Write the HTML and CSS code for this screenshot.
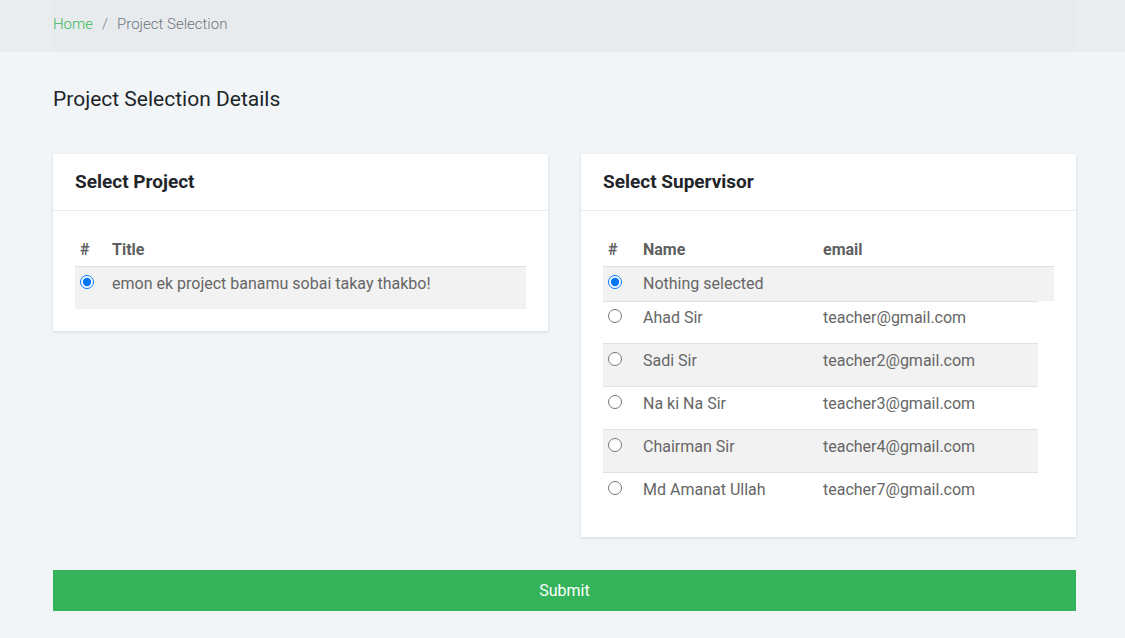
FILE: index.html
```html
<!DOCTYPE html>
<html>
<head>
<meta charset="utf-8">
<link rel="stylesheet" href="styles.css">
</head>
<body>
<div class="topband">
  <nav class="breadcrumb">
    <a class="crumb-link" href="#">Home</a>
    <span class="crumb-sep">/</span>
    <span class="crumb-current">Project Selection</span>
  </nav>
</div>
<main class="container">
  <h1 class="page-title">Project Selection Details</h1>
  <div class="cards">
    <section class="card">
      <header class="card-header">Select Project</header>
      <div class="card-body">
        <div class="trow thead proj-cols"><div class="cell">#</div><div class="cell">Title</div></div>
        <div class="trow striped proj-cols tall"><div class="cell"><input class="radio" type="radio" name="project" checked></div><div class="cell">emon ek project banamu sobai takay thakbo!</div></div>
      </div>
    </section>
    <section class="card">
      <header class="card-header">Select Supervisor</header>
      <div class="card-body">
        <div class="trow thead sup-cols"><div class="cell">#</div><div class="cell">Name</div><div class="cell">email</div></div>
        <div class="trow striped sup-cols"><div class="cell"><input class="radio" type="radio" name="sup" checked></div><div class="cell">Nothing selected</div><div class="cell"></div></div>
        <div class="subtable">
          <div class="trow sup-cols tall"><div class="cell"><input class="radio" type="radio" name="sup"></div><div class="cell">Ahad Sir</div><div class="cell">teacher@gmail.com</div></div>
          <div class="trow striped sup-cols tall"><div class="cell"><input class="radio" type="radio" name="sup"></div><div class="cell">Sadi Sir</div><div class="cell">teacher2@gmail.com</div></div>
          <div class="trow sup-cols tall"><div class="cell"><input class="radio" type="radio" name="sup"></div><div class="cell">Na ki Na Sir</div><div class="cell">teacher3@gmail.com</div></div>
          <div class="trow striped sup-cols tall"><div class="cell"><input class="radio" type="radio" name="sup"></div><div class="cell">Chairman Sir</div><div class="cell">teacher4@gmail.com</div></div>
          <div class="trow sup-cols tall"><div class="cell"><input class="radio" type="radio" name="sup"></div><div class="cell">Md Amanat Ullah</div><div class="cell">teacher7@gmail.com</div></div>
        </div>
      </div>
    </section>
  </div>
  <button class="submit" type="button">Submit</button>
</main>
</body>
</html>
```
FILE: styles.css
```css
* { box-sizing: border-box; }
html, body { margin: 0; padding: 0; }
body {
  background: #f2f5f8;
  font-family: Roboto, "Liberation Sans", sans-serif;
  font-size: 16px;
  line-height: 24px;
  color: #666;
}
.topband {
  background: #ebecee;
  height: 52px;
  padding: 0 49px 0 53px;
}
.breadcrumb {
  background: #e8ebee;
  height: 52px;
  border-radius: 0 0 4px 4px;
  display: flex;
  align-items: center;
  font-size: 15px;
  font-weight: 300;
  padding-bottom: 4px;
}
.crumb-link { color: #3cb95c; text-decoration: none; }
.crumb-sep { color: #7a8088; padding: 0 9px; }
.crumb-current { color: #6c757d; }
.container { padding: 0 49px 0 53px; }
.page-title {
  margin: 35px 0 43px;
  font-size: 21px;
  line-height: 24px;
  font-weight: 400;
  color: #212529;
}
.cards {
  display: grid;
  grid-template-columns: 1fr 1fr;
  gap: 33px;
  align-items: start;
}
.card {
  background: #fff;
  box-shadow: 0 1px 3px rgba(0,0,0,0.12);
}
.card-header {
  height: 57px;
  padding: 0 22px;
  display: flex;
  align-items: center;
  font-size: 19px;
  font-weight: 700;
  color: #212529;
  border-bottom: 1px solid #e9ecef;
}
.card-body { padding: 21px 22px 22px; }
.trow { display: grid; }
.proj-cols { grid-template-columns: 32px 1fr; }
.sup-cols { grid-template-columns: 35px 180px 1fr; }
.cell { padding: 0 5px; }
.thead {
  font-weight: 700;
  color: #5f5f5f;
  padding: 6px 0 4px;
  border-bottom: 1px solid #dee2e6;
}
.trow:not(.thead) .cell { padding-top: 4.8px; padding-bottom: 4.8px; }
.tall .cell { padding-bottom: 13px !important; }
.striped { background: #f2f2f2; }
.subtable { width: 435px; }
.subtable .trow { border-top: 1px solid #dee2e6; }
.radio {
  margin: 3px 0 0 0;
  width: 14px;
  height: 14px;
  vertical-align: top;
}
.submit {
  display: block;
  width: 100%;
  height: 41px;
  margin-top: 33px;
  background: #34b35b;
  border: none;
  color: #fff;
  font-family: Roboto, "Liberation Sans", sans-serif;
  font-size: 16px;
}
```
